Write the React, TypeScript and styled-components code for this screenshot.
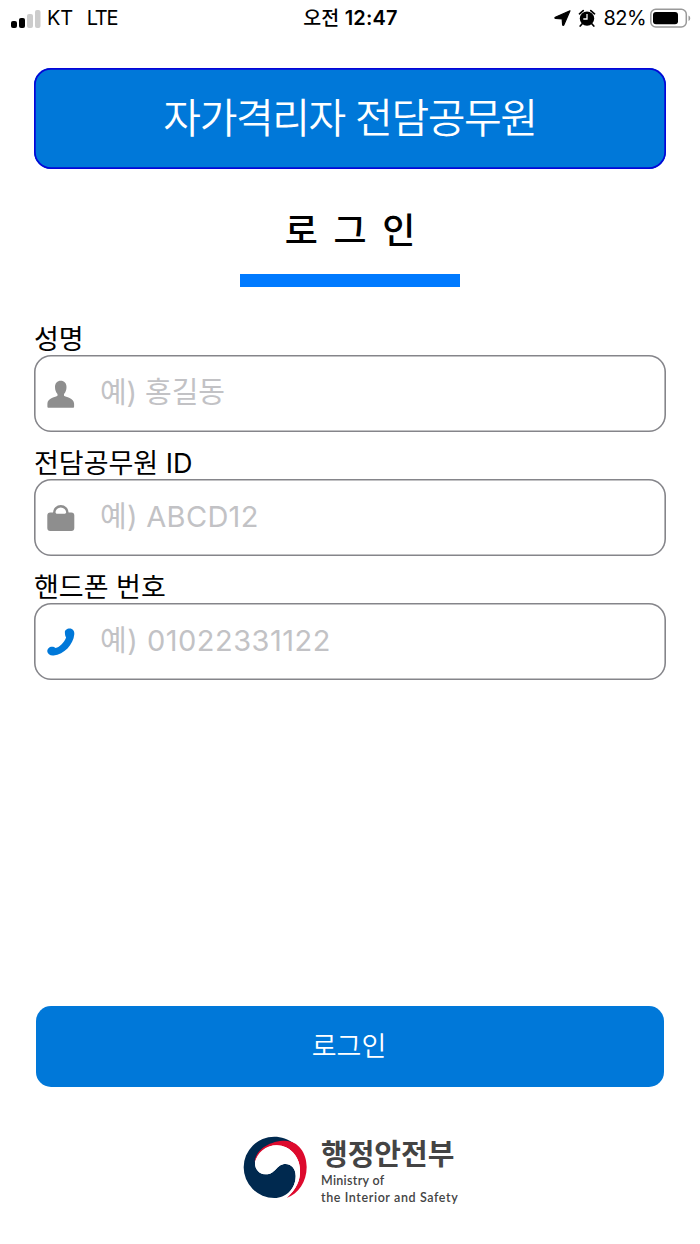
import React from "react";
import styled, { createGlobalStyle } from "styled-components";

const GlobalStyle = createGlobalStyle`
  *, *::before, *::after { box-sizing: border-box; }
  body {
    margin: 0;
    background: #fff;
    color: #000;
    font-family: Inter, "Noto Sans CJK KR", sans-serif;
  }
`;

const Screen = styled.div`
  width: 700px;
  height: 1244px;
  display: flex;
  flex-direction: column;
  overflow: hidden;
`;

const StatusBar = styled.header`
  height: 36px;
  padding: 0 9px 0 11px;
  display: grid;
  grid-template-columns: 1fr auto 1fr;
  align-items: center;
  font-size: 20px;
  line-height: 36px;
`;

const StatusGroup = styled.div<{ $end?: boolean }>`
  display: flex;
  align-items: center;
  justify-content: ${(p) => (p.$end ? "flex-end" : "flex-start")};
`;

const StatusText = styled.span<{ $gap: number; $spacing?: number }>`
  height: 38px;
  margin-left: ${(p) => p.$gap}px;
  letter-spacing: ${(p) => p.$spacing ?? 0}px;
  white-space: nowrap;
`;

const Clock = styled.span`
  height: 38px;
  padding-right: 1px;
  font-size: 20px;
  font-weight: 600;
  letter-spacing: 0.2px;
  white-space: nowrap;
`;

const ClockPeriod = styled.span`
  font-size: 19.5px;
  font-weight: 500;
`;

const AlarmIcon = styled.svg`
  width: 18px;
  height: 18px;
  margin: -2px 0 0 7px;
`;

const BatteryIcon = styled.svg`
  width: 41px;
  height: 20px;
  margin: -2px 0 0 4px;
`;

const Banner = styled.h1`
  margin: 32px 34px 0;
  height: 101px;
  border-radius: 17px;
  background: #0078d9;
  box-shadow: inset 0 0 0 1.7px #0505d8;
  color: #fff;
  display: flex;
  justify-content: center;
  font-size: 41px;
  font-weight: 350;
  line-height: 100px;
  letter-spacing: -1.4px;
`;

const Heading = styled.div`
  align-self: center;
  width: 220px;
  height: 118px;
  padding-top: 37px;
  border-bottom: 13px solid #007aff;
  text-align: center;
  font-size: 36px;
  font-weight: 500;
  line-height: 50px;
  word-spacing: 6px;
  white-space: nowrap;
`;

const Form = styled.form`
  flex: 1;
  padding: 32px 34px 0;
  display: flex;
  flex-direction: column;
`;

const Field = styled.label`
  height: 124px;
  display: flex;
  flex-direction: column;
`;

const FieldLabel = styled.span`
  height: 36px;
  line-height: 41px;
  font-size: 27px;
  letter-spacing: 0;
`;

const FieldBox = styled.span`
  height: 76.500px;
  padding: 0 13px;
  display: flex;
  align-items: center;
  border-radius: 17px;
  box-shadow: inset 0 0 0 1.6px #85858a;
`;

const FieldIcon = styled.svg`
  width: 28px;
  height: 28px;
  flex: none;
  margin-top: 2px;
`;

const FieldInput = styled.input<{ $spacing: number }>`
  flex: 1;
  min-width: 0;
  height: 60px;
  margin: 0 0 1px 25px;
  padding: 0;
  border: 0;
  outline: 0;
  background: transparent;
  font: 380 29px Inter, "Noto Sans CJK KR", sans-serif;
  letter-spacing: ${(p) => p.$spacing}px;
  &::placeholder { color: #c2c2c5; opacity: 1; }
`;

const LoginButton = styled.button`
  margin: auto 2px 0;
  height: 81px;
  padding: 0 2px 0 0;
  border: 0;
  border-radius: 15px;
  background: #0078d9;
  color: #fff;
  font: 350 27px/81px Inter, "Noto Sans CJK KR", sans-serif;
`;

const Footer = styled.footer`
  height: 157px;
  padding: 49px 0 0 243px;
  display: flex;
  gap: 14px;
  color: #444;
`;

const Emblem = styled.svg`
  width: 64px;
  height: 63px;
  flex: none;
`;

const Ministry = styled.div`
  padding-top: 1px;
  display: flex;
  flex-direction: column;
`;

const MinistryName = styled.strong`
  font-size: 29px;
  font-weight: 700;
  line-height: 35px;
`;

const MinistryLine = styled.span<{ $spacing?: number }>`
  font: 600 12.5px/17px Lato, sans-serif;
  white-space: nowrap;
  letter-spacing: ${(p) => p.$spacing ?? 0.3}px;
`;

const PersonIcon = () => (
  <FieldIcon viewBox="0 0 28 28" fill="#8e8e8e">
    <path d="M13.700.8c3.500 0 5.800 2.500 5.800 6.200 0 3-1 5.500-2.500 7v1.700c1.500 1.500 10.100 2 10.100 8.100v2.600c0 .9-.4 1.300-1.300 1.300H1.700c-.9 0-1.300-.4-1.300-1.300v-2.600c0-6.100 8.600-6.600 10.100-8.100V14C9 12.500 8 10 8 7 8 3.300 10.300.8 13.700.8Z" />
  </FieldIcon>
);

const BagIcon = () => (
  <FieldIcon viewBox="0 0 28 28">
    <path d="M7.200 10V8.800a6.600 6.600 0 0 1 13.200 0V10" fill="none" stroke="#8e8e8e" strokeWidth="2.400" />
    <path d="M3.300 8.500h5.100c.4.900 1 1.200 2 1.200h6.800c1 0 1.600-.3 2-1.200h5.100c2 0 3 1 3 3v12.600c0 2-1 3-3 3h-21c-2 0-3-1-3-3V11.500c0-2 1-3 3-3Z" fill="#8e8e8e" />
  </FieldIcon>
);

const PhoneIcon = () => (
  <FieldIcon viewBox="0 0 28 28" fill="#0078d9">
    <path d="M17.900 4.700C17.600 2.200 19.900.5 22.600.5c3.200 0 5 2.500 4.700 5.700-1 10.500-10.300 20.300-20.700 21.200-3.500.3-6-1.300-6.300-3.900-.2-2.700 2-4.800 4.700-4.800 1.500 0 2.600.4 3.500 1.400C13 18.900 17 14.800 19.100 9.500c-.8-1.200-1.100-2.800-1.200-4.800Z" />
  </FieldIcon>
);

const fields = [
  { label: "성명", placeholder: "예) 홍길동", spacing: -0.1, icon: <PersonIcon /> },
  { label: "전담공무원 ID", placeholder: "예) ABCD12", spacing: 0.3, icon: <BagIcon /> },
  { label: "핸드폰 번호", placeholder: "예) 01022331122", spacing: 0.5, icon: <PhoneIcon /> },
];

export default function App() {
  return (
    <Screen>
      <GlobalStyle />
      <StatusBar>
        <StatusGroup>
          <svg width="30" height="19" viewBox="0 0 30 19">
            <rect x="0" y="11" width="6" height="7" rx="2" />
            <rect x="8" y="8" width="6" height="10" rx="2" />
            <rect x="16" y="4" width="6" height="14" rx="2" fill="#ccc" />
            <rect x="24" y="0" width="5.500" height="18" rx="2" fill="#ccc" />
          </svg>
          <StatusText $gap={6} $spacing={-0.3}>KT</StatusText>
          <StatusText $gap={14} $spacing={-1.3}>LTE</StatusText>
        </StatusGroup>
        <Clock><ClockPeriod>오전</ClockPeriod> 12:47</Clock>
        <StatusGroup $end>
          <svg width="17" height="18" viewBox="0 0 17 18">
            <path d="M16 .8 9.800 15c-.3.600-1.200.4-1.200-.2L8.200 8.900 1.500 8.500C.8 8.500.7 7.600 1.300 7.300Z" stroke="#000" strokeWidth="1.200" strokeLinejoin="round" />
          </svg>
          <AlarmIcon viewBox="0 0 18 18">
            <circle cx="9" cy="9.600" r="7.200" />
            <path d="M1.500 4.800 5.200 1.600M12.800 1.600l3.700 3.200M4 15l-1.800 2M14 15l1.800 2" stroke="#000" strokeWidth="1.700" strokeLinecap="round" />
            <path d="M9 5v5H5.300" stroke="#fff" strokeWidth="1.300" fill="none" />
          </AlarmIcon>
          <StatusText $gap={8} $spacing={-0.6}>82%</StatusText>
          <BatteryIcon viewBox="0 0 41 20">
            <rect x=".8" y="1.300" width="35.500" height="17.600" rx="5" fill="none" stroke="#999" strokeWidth="1.500" />
            <rect x="3" y="4" width="25" height="12.300" rx="3" />
            <path d="M38.500 7.500c2.300.8 2.300 4.700 0 5.500Z" fill="#999" />
          </BatteryIcon>
        </StatusGroup>
      </StatusBar>
      <Banner>자가격리자 전담공무원</Banner>
      <Heading>로 그 인</Heading>
      <Form onSubmit={(e) => e.preventDefault()}>
        {fields.map((f) => (
          <Field key={f.label}>
            <FieldLabel>{f.label}</FieldLabel>
            <FieldBox>
              {f.icon}
              <FieldInput placeholder={f.placeholder} $spacing={f.spacing} />
            </FieldBox>
          </Field>
        ))}
        <LoginButton type="submit">로그인</LoginButton>
      </Form>
      <Footer>
        <Emblem viewBox="9 12 192 189">
          <path fill="#00294f" d="M164 36C144 20 124 14 103 14A92 92 0 0 0 103 198C140 198 167 168 167 132 167 108 152 96 137 96 108 96 108 127 77 127 58 127 45 112 45 92 45 60 95 22 164 36Z" />
          <path fill="#dd0a2d" d="M44 90C48 48 95 26 135 26 175 27 200 62 200 105 200 150 175 185 140 198 170 170 182 145 180 110 178 75 150 40 110 40 80 40 58 60 44 90Z" />
          <path fill="#fff" d="M45 94C50 61 78 40 110 40c40 0 68 35 70 70 2 35-10 60-40 88l-10-3c24-14 37-37 37-63 0-24-15-36-30-36-29 0-29 31-60 31-19 0-32-14-32-33Z" />
        </Emblem>
        <Ministry>
          <MinistryName>행정안전부</MinistryName>
          <MinistryLine>Ministry of</MinistryLine>
          <MinistryLine $spacing={0.6}>the Interior and Safety</MinistryLine>
        </Ministry>
      </Footer>
    </Screen>
  );
}
